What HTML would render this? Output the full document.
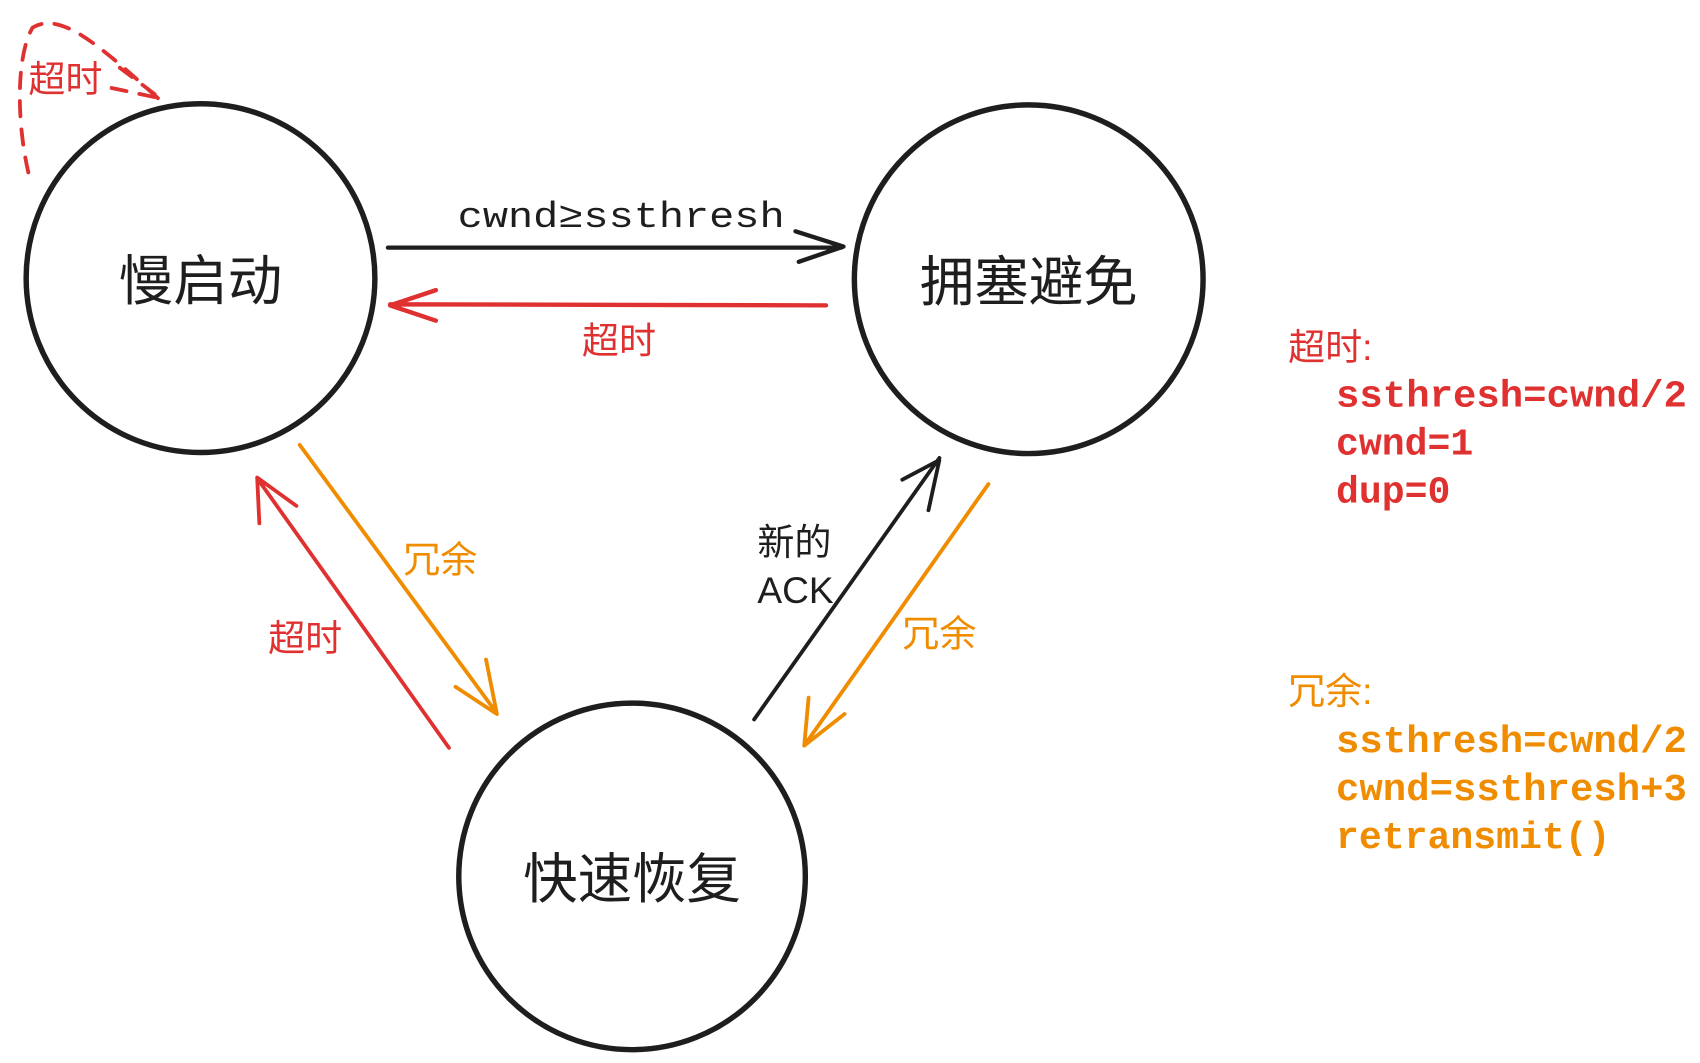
<!DOCTYPE html>
<html><head><meta charset="utf-8"><style>
html,body{margin:0;padding:0;background:#fff;width:1700px;height:1063px;overflow:hidden}
svg{display:block}
.cj{font-family:"Liberation Sans","Noto Sans CJK SC",sans-serif}
.mo{font-family:"Liberation Mono","DejaVu Sans Mono",monospace}
</style></head><body>
<svg width="1700" height="1063" viewBox="0 0 1560 975" xmlns="http://www.w3.org/2000/svg">
<g fill="none" stroke="#1e1e1e" stroke-width="5">
<circle cx="184" cy="255" r="160"/>
<circle cx="944" cy="256" r="160"/>
<circle cx="580" cy="804" r="159"/>
</g>
<g fill="none" stroke-linecap="round" stroke-linejoin="round">
<path d="M356 227 L772 227 M730 212 L774 226 L733 240" stroke="#1e1e1e" stroke-width="4"/>
<path d="M758 280 L358 279 M400 266 L358 280 L400 294" stroke="#e03131" stroke-width="4"/>
<path d="M275 408 L455 653 M418 630 L456 655 L446 605" stroke="#f08c00" stroke-width="3.5"/>
<path d="M412 686 L237 440 M238 480 L236 438 L272 464" stroke="#e03131" stroke-width="3.5"/>
<path d="M692 660 L862 420 M828 440 L862 422 L852 468" stroke="#1e1e1e" stroke-width="3.5"/>
<path d="M907 444 L738 684 M742 640 L738 684 L775 655" stroke="#f08c00" stroke-width="3.5"/>
<path d="M26 158 C15 110 15 50 30 25 C55 10 90 40 145 90 M110 62 L147 90 L100 80" stroke="#e03131" stroke-width="3.5" stroke-dasharray="14 12"/>
</g>
<g class="cj" font-size="50" fill="#1e1e1e" text-anchor="middle">
<text x="184" y="275">慢启动</text>
<text x="944" y="276">拥塞避免</text>
<text x="580" y="824">快速恢复</text>
</g>
<text x="420" y="208" class="mo" font-size="33" fill="#1e1e1e" textLength="300" lengthAdjust="spacingAndGlyphs">cwnd≥ssthresh</text>
<g class="cj" font-size="34">
<text x="26" y="84" fill="#e03131">超时</text>
<text x="534" y="324" fill="#e03131">超时</text>
<text x="246" y="597" fill="#e03131">超时</text>
<text x="370" y="525" fill="#f08c00">冗余</text>
<text x="828" y="593" fill="#f08c00">冗余</text>
<text x="695" y="509" fill="#1e1e1e">新的</text>
<text x="695" y="553" fill="#1e1e1e">ACK</text>
<text x="1182" y="330" fill="#e03131">超时:</text>
<text x="1182" y="646" fill="#f08c00">冗余:</text>
</g>
<g class="mo" font-size="35" font-weight="bold">
<text x="1226" y="373" fill="#e03131" textLength="322" lengthAdjust="spacingAndGlyphs">ssthresh=cwnd/2</text>
<text x="1226" y="417" fill="#e03131">cwnd=1</text>
<text x="1226" y="461" fill="#e03131">dup=0</text>
<text x="1226" y="690" fill="#f08c00" textLength="322" lengthAdjust="spacingAndGlyphs">ssthresh=cwnd/2</text>
<text x="1226" y="734" fill="#f08c00" textLength="322" lengthAdjust="spacingAndGlyphs">cwnd=ssthresh+3</text>
<text x="1226" y="778" fill="#f08c00">retransmit()</text>
</g>
</svg>
</body></html>
